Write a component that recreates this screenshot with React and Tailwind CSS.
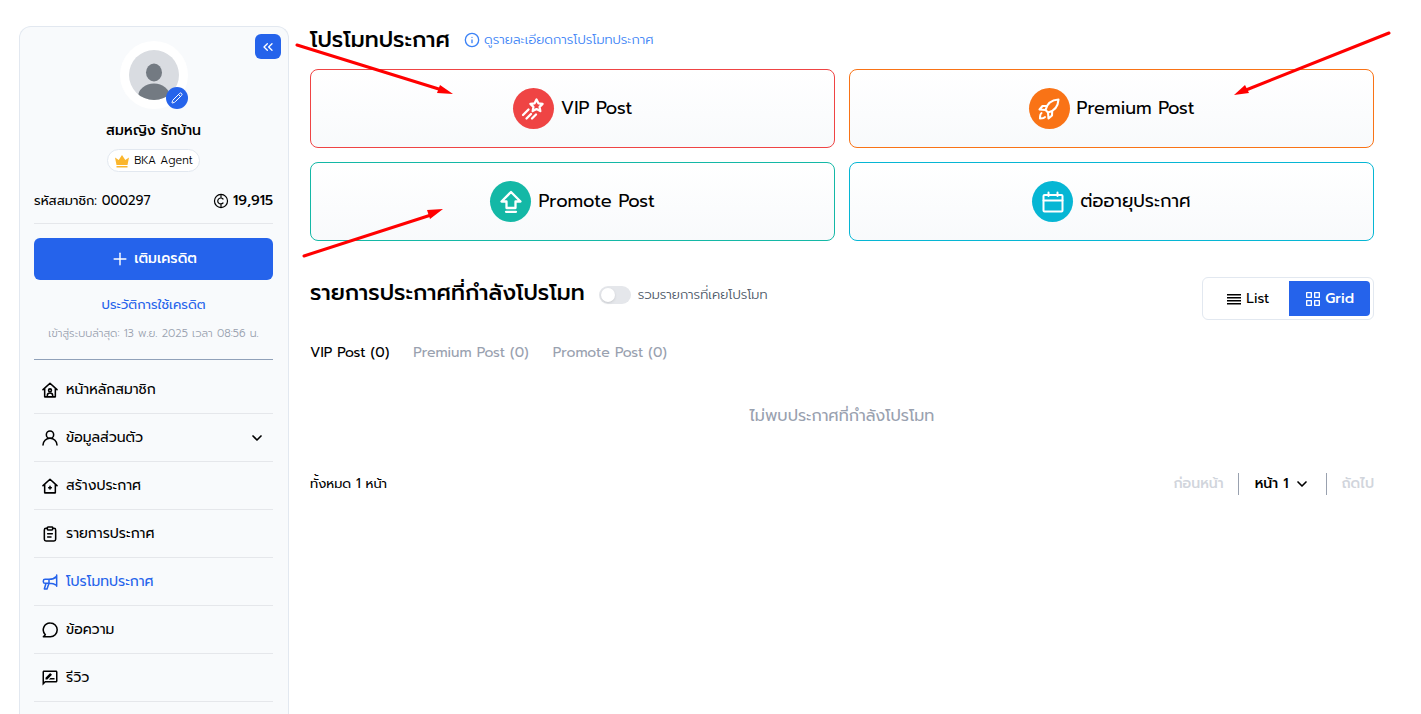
import { ChevronDown, ChevronsLeft, Info, Pencil, Plus } from "lucide-react";
import { MdOutlineRateReview } from "react-icons/md";

function Icon({ className = "size-4", strokeWidth = 2.3, children }) {
  return (
    <svg
      viewBox="0 0 24 24"
      fill="none"
      stroke="currentColor"
      strokeWidth={strokeWidth}
      strokeLinecap="round"
      strokeLinejoin="round"
      aria-hidden="true"
      className={`shrink-0 ${className}`}
    >
      {children}
    </svg>
  );
}

const HomeUserIcon = () => (
  <Icon>
    <path d="M1.500 11.500 12 1.800l10.500 9.700M4 9.500v12.800h16V9.500" />
    <circle cx="12" cy="12.500" r="2.200" />
    <path d="M8 21.500V20a4 3.500 0 0 1 8 0v1.500" />
  </Icon>
);

const UserIcon = () => (
  <Icon>
    <circle cx="12" cy="7" r="5.500" />
    <path d="M1.500 22.500a10.500 10 0 0 1 21 0" />
  </Icon>
);

const HomePlusIcon = () => (
  <Icon>
    <path d="M1.500 11.500 12 1.800l10.500 9.700M4 9.500v12.800h16V9.500M12 12.500v4M10 14.500h4" />
  </Icon>
);

const ClipboardIcon = () => (
  <Icon>
    <path d="M8 3.500H6a2.500 2.500 0 0 0-2.500 2.500v14A2.500 2.500 0 0 0 6 22.500h12a2.500 2.500 0 0 0 2.500-2.500V6A2.500 2.500 0 0 0 18 3.500h-2" />
    <rect x="8" y="1.500" width="8" height="4.500" rx="1" />
    <path d="M8.500 11.500h7M8.500 16.500h5" />
  </Icon>
);

const MegaphoneIcon = () => (
  <Icon>
    <path d="M22 1.500v17M10.500 8C15 8 19 6.500 22 3.500M10.500 14c4.500 0 8.500 1 11.500 3M10.500 8H4.500A2.500 2.500 0 0 0 2 10.500v1A2.500 2.500 0 0 0 4.500 14h6ZM6 14 3.500 22.500h4L10.500 14" />
  </Icon>
);

const CommentIcon = () => (
  <Icon>
    <path d="M12.500 1.500a10.300 10.300 0 0 1 0 20.600H2l3-3a10.300 10.300 0 0 1 7.500-17.600Z" />
  </Icon>
);

const ReviewIcon = () => <MdOutlineRateReview className="-mx-px size-[18px] shrink-0" aria-hidden="true" />;

const ShootingStarIcon = () => (
  <Icon className="size-6">
    <path d="m15.500 2.500 1.900 3.800 4.200.6-3 3 .7 4.200-3.800-2-3.800 2 .7-4.200-3-3 4.200-.6ZM7.500 12.500l-5.500 5.500M10 17l-4.500 4.500M15 17.500l-4 4" />
  </Icon>
);

const RocketIcon = () => (
  <Icon className="size-6" strokeWidth={2.1}>
    <path d="M8.500 13C10 6.500 14 3 21.500 2.500 21 10 17.500 14 11 15.500ZM10 9 5.500 9 2.500 12.500l6 .5M11 15.500l.5 6 3.500-3 .2-4.500M4.500 16c-1.500 1-1.500 3-1.500 5.500 2 0 4 0 5-1.500M8.500 13l2.500 2.500" />
  </Icon>
);

const PromoteIcon = () => (
  <Icon className="size-6">
    <path d="M12 2 2.500 11.500h5V18h9v-6.500h5ZM7 21.800h10" />
  </Icon>
);

const CalendarIcon = () => (
  <Icon className="size-6" strokeWidth={2}>
    <rect x="2.500" y="5" width="19" height="16.500" rx="1" />
    <path d="M2.500 10.500h19M7.500 2.500V6M16.500 2.500V6" />
  </Icon>
);

const CoinIcon = () => (
  <Icon strokeWidth={1.8}>
    <circle cx="12" cy="12" r="9.800" />
    <path d="M15 9a4.500 4.500 0 1 0 0 6M12 3v4.500M12 16v5" />
  </Icon>
);

const GridIcon = () => (
  <Icon strokeWidth={2}>
    <path d="M2.500 2.500h7v7h-7ZM14.500 2.500h7v7h-7ZM2.500 14.500h7v7h-7ZM14.500 14.500h7v7h-7Z" />
  </Icon>
);

const ListIcon = () => (
  <svg viewBox="0 0 16 16" fill="currentColor" aria-hidden="true" className="size-4 shrink-0">
    <path d="M1 3h14v1.500H1ZM1 6h14v1.500H1ZM1 9h14v1.500H1ZM1 12h14v1.500H1Z" />
  </svg>
);

function Avatar() {
  return (
    <div className="relative size-[68px] rounded-full bg-white p-[9px]">
      <svg viewBox="0 0 50 50" className="size-full" aria-hidden="true">
        <clipPath id="avatar-disc">
          <circle cx="25" cy="25" r="25" />
        </clipPath>
        <g clipPath="url(#avatar-disc)">
          <path fill="#d9dce1" d="M0 0h50v50H0z" />
          <ellipse cx="25" cy="22.500" rx="8" ry="9" fill="#737a82" />
          <ellipse cx="25" cy="47" rx="16" ry="13.500" fill="#737a82" />
        </g>
      </svg>
      <button
        type="button"
        aria-label="แก้ไขรูปโปรไฟล์"
        className="absolute right-0 bottom-0 flex size-[22px] items-center justify-center rounded-full bg-[#2563eb] text-white"
      >
        <Pencil className="size-3" />
      </button>
    </div>
  );
}

const menu = [
  { label: "หน้าหลักสมาชิก", icon: HomeUserIcon },
  { label: "ข้อมูลส่วนตัว", icon: UserIcon, expandable: true },
  { label: "สร้างประกาศ", icon: HomePlusIcon },
  { label: "รายการประกาศ", icon: ClipboardIcon },
  { label: "โปรโมทประกาศ", icon: MegaphoneIcon, active: true },
  { label: "ข้อความ", icon: CommentIcon },
  { label: "รีวิว", icon: ReviewIcon },
];

function Sidebar() {
  return (
    <aside className="relative w-[270px] shrink-0 rounded-t-xl border border-b-0 border-slate-200 bg-slate-50 pt-3.5 pr-[15px] pl-3.5">
      <button
        type="button"
        aria-label="ย่อเมนู"
        className="absolute top-[7px] right-[7px] flex h-[25px] w-[26px] items-center justify-center rounded-md bg-[#2563eb] text-white"
      >
        <ChevronsLeft className="size-4" />
      </button>
      <div className="flex flex-col items-center">
        <Avatar />
        <p className="mt-2.5 text-sm leading-6 font-medium">สมหญิง รักบ้าน</p>
        <p className="mt-1.5 flex h-[23px] items-center gap-1 rounded-full border border-slate-200 bg-white px-1.5 text-[11px] leading-5 font-light">
          <svg viewBox="0 0 16 16" className="size-4" fill="#fbb62d" aria-hidden="true">
            <path d="M1 4.500 4.700 7 8 2l3.300 5L15 4.500 13.500 12h-11ZM2.500 13h11v1.500h-11Z" />
          </svg>
          BKA Agent
        </p>
      </div>
      <div className="mt-[17px] flex items-center justify-between border-b border-gray-200 pb-2.5 text-[13px] leading-6">
        <span>รหัสสมาชิก: 000297</span>
        <span className="flex items-center gap-1 text-sm leading-6 font-medium">
          <CoinIcon />
          19,915
        </span>
      </div>
      <button
        type="button"
        className="mt-3.5 flex h-[42px] w-full items-center justify-center gap-1 rounded-md bg-[#2563eb] text-sm font-medium text-white"
      >
        <Plus className="size-5" strokeWidth={1.7} />
        เติมเครดิต
      </button>
      <a href="#credit" className="mt-[13px] block text-center text-[13px] leading-6 text-[#2563eb]">
        ประวัติการใช้เครดิต
      </a>
      <p className="mt-[5px] border-b border-slate-400 pb-[13px] text-center text-[11px] leading-6 font-light text-gray-400">
        เข้าสู่ระบบล่าสุด: 13 พ.ย. 2025 เวลา 08:56 น.
      </p>
      <nav className="pt-1.5">
        {menu.map(({ label, icon: ItemIcon, expandable, active }) => (
          <a
            key={label}
            href="#menu"
            className={`flex h-12 items-center gap-2 border-b border-gray-200 px-2 text-sm ${active ? "text-[#2563eb]" : "text-black"}`}
          >
            <ItemIcon />
            <span className="flex-1">{label}</span>
            {expandable && <ChevronDown className="size-4" strokeWidth={2.5} />}
          </a>
        ))}
      </nav>
    </aside>
  );
}

const packages = [
  { label: "VIP Post", icon: ShootingStarIcon, border: "border-[#ef4444]", disc: "bg-[#ef4444]" },
  { label: "Premium Post", icon: RocketIcon, border: "border-[#f97316]", disc: "bg-[#f97316]" },
  { label: "Promote Post", icon: PromoteIcon, border: "border-[#14b8a6]", disc: "bg-[#14b8a6]" },
  { label: "ต่ออายุประกาศ", icon: CalendarIcon, border: "border-[#06b6d4]", disc: "bg-[#06b6d4]" },
];

function Arrows() {
  return (
    <>
      <svg viewBox="0 0 170 230" className="pointer-events-none absolute top-4 -left-4 h-[230px] w-[170px]" aria-hidden="true">
        <g stroke="#f00" strokeWidth="3" strokeLinecap="round">
          <path d="m3 3 145 45M10 214l127-41" />
        </g>
        <path fill="#f00" d="m159 52-16-1 3-8ZM149 167l-16 1 3 9Z" />
      </svg>
      <svg viewBox="0 0 160 70" className="pointer-events-none absolute top-1 -right-[18px] h-[70px] w-40" aria-hidden="true">
        <path d="M157 3 14 60" stroke="#f00" strokeWidth="3" strokeLinecap="round" />
        <path fill="#f00" d="m2 65 11-10 4 8Z" />
      </svg>
    </>
  );
}

export default function App() {
  return (
    <div className="flex min-h-screen gap-[21px] bg-white pt-[26px] pr-[47px] pl-[19px] font-['Prompt','Noto_Sans_Thai','Noto_Sans',sans-serif] text-black">
      <Sidebar />
      <main className="relative min-w-0 flex-1">
        <header className="flex h-7 items-center gap-3.5">
          <h1 className="text-[22px] leading-7 font-medium">โปรโมทประกาศ</h1>
          <a href="#details" className="flex items-center gap-1 text-[13px] font-light text-[#3b82f6]">
            <Info className="size-4" />
            ดูรายละเอียดการโปรโมทประกาศ
          </a>
        </header>
        <div className="mt-[15px] grid grid-cols-2 gap-3.5">
          {packages.map(({ label, icon: CardIcon, border, disc }) => (
            <button
              key={label}
              type="button"
              className={`flex h-[79px] items-center justify-center gap-[7px] rounded-lg border bg-linear-to-b from-white to-slate-50 text-lg ${border}`}
            >
              <span className={`flex size-[41px] items-center justify-center rounded-full text-white ${disc}`}>
                <CardIcon />
              </span>
              <span className="pb-0.5">{label}</span>
            </button>
          ))}
        </div>
        <Arrows />

        <section className="mt-9">
          <div className="flex items-start justify-between">
            <div className="flex items-center gap-3.5">
              <h2 className="text-[22px] leading-8 font-medium">รายการประกาศที่กำลังโปรโมท</h2>
              <label className="flex items-center gap-[7px] pt-1 text-[13px] leading-6 font-light text-gray-600">
                <input
                  type="checkbox"
                  role="switch"
                  className="h-[18px] w-8 appearance-none rounded-full bg-gray-200 p-0.5 before:block before:size-3.5 before:rounded-full before:bg-white before:shadow-sm checked:bg-[#2563eb] checked:before:ml-3.5"
                />
                รวมรายการที่เคยโปรโมท
              </label>
            </div>
            <div className="flex h-[43px] rounded-md border border-slate-200 p-[3px] text-sm">
              <button type="button" className="flex items-center gap-1 rounded-l-sm px-5">
                <ListIcon />
                List
              </button>
              <button type="button" className="flex items-center gap-1 rounded-r-sm bg-[#2563eb] px-4 font-medium text-white">
                <GridIcon />
                Grid
              </button>
            </div>
          </div>

          <div className="mt-[21px] flex gap-6 text-sm leading-6 text-gray-400">
            <button type="button" className="text-black">VIP Post (0)</button>
            <button type="button">Premium Post (0)</button>
            <button type="button">Promote Post (0)</button>
          </div>
          <p className="mt-[39px] text-center text-base leading-6 text-gray-400">ไม่พบประกาศที่กำลังโปรโมท</p>

          <footer className="mt-11 flex h-6 items-center justify-between text-[13px]">
            <span>ทั้งหมด 1 หน้า</span>
            <div className="flex h-[22px] items-center text-sm font-medium">
              <button type="button" disabled className="pr-3.5 text-gray-300">ก่อนหน้า</button>
              <button type="button" className="flex h-full items-center gap-1.5 border-x border-gray-400 px-4">
                หน้า 1
                <ChevronDown className="size-4" strokeWidth={2.5} />
              </button>
              <button type="button" disabled className="pl-3.5 text-gray-300">ถัดไป</button>
            </div>
          </footer>
        </section>
      </main>
    </div>
  );
}
